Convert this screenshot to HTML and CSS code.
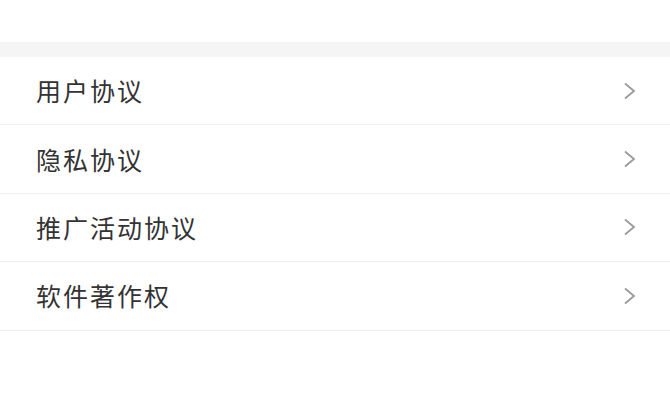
FILE: index.html
```html
<!DOCTYPE html>
<html lang="zh">
<head>
<meta charset="utf-8">
<link rel="stylesheet" href="styles.css">
</head>
<body>
<div class="top"></div>
<div class="band"></div>
<ul class="list">
  <li class="row"><span class="label">用户协议</span><svg class="chev" width="14" height="18" viewBox="0 0 14 18"><path d="M2 1.5 L11 9 L2 16.5" fill="none" stroke="#9a9a9a" stroke-width="1.8"/></svg></li>
  <li class="row"><span class="label">隐私协议</span><svg class="chev" width="14" height="18" viewBox="0 0 14 18"><path d="M2 1.5 L11 9 L2 16.5" fill="none" stroke="#9a9a9a" stroke-width="1.8"/></svg></li>
  <li class="row"><span class="label">推广活动协议</span><svg class="chev" width="14" height="18" viewBox="0 0 14 18"><path d="M2 1.5 L11 9 L2 16.5" fill="none" stroke="#9a9a9a" stroke-width="1.8"/></svg></li>
  <li class="row"><span class="label">软件著作权</span><svg class="chev" width="14" height="18" viewBox="0 0 14 18"><path d="M2 1.5 L11 9 L2 16.5" fill="none" stroke="#9a9a9a" stroke-width="1.8"/></svg></li>
</ul>
</body>
</html>
```
FILE: styles.css
```css
html, body {
  margin: 0;
  padding: 0;
  background: #ffffff;
}
body {
  font-family: "Noto Sans CJK SC", "Noto Sans", sans-serif;
  color: #333333;
}
.top {
  height: 42px;
}
.band {
  height: 15px;
  background: #f5f5f5;
}
.list {
  list-style: none;
  margin: 0;
  padding: 0;
}
.row {
  height: 67.4px;
  border-bottom: 1px solid #efefef;
  display: flex;
  align-items: center;
  justify-content: space-between;
  padding: 0 33px 0 36px;
}
.label {
  font-size: 25px;
  letter-spacing: 2px;
  line-height: 1;
}
.chev {
  display: block;
}
```
